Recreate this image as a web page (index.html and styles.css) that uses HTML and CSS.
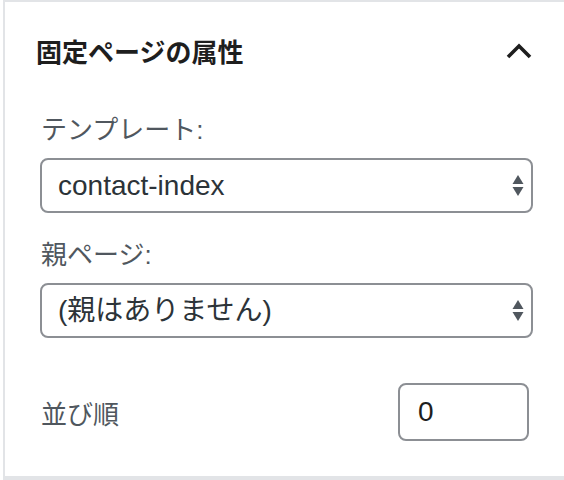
FILE: index.html
```html
<!DOCTYPE html>
<html lang="ja">
  <head>
    <meta charset="UTF-8" />
    <meta name="viewport" content="width=device-width, initial-scale=1.0" />
    <title>固定ページの属性</title>
    <link rel="stylesheet" href="styles.css">
  </head>
  <body>
    <div class="panel">
      <div class="panel-head">
        <h2 class="panel-title">固定ページの属性</h2>
        <svg class="chevron" width="26" height="16" viewBox="0 0 26 16">
          <polyline points="2,14 13,3 24,14" fill="none" stroke="#1e1e1e" stroke-width="3.6" />
        </svg>
      </div>
      <div class="panel-body">
        <label for="template" class="field-label">テンプレート:</label>
        <div class="select-wrap">
          <select id="template" class="field-select">
            <option>contact-index</option>
          </select>
          <svg class="arrows" width="12" height="22" viewBox="0 0 12 22">
            <polygon points="6,0 11.5,9 0.5,9" fill="#50575e" />
            <polygon points="0.5,12 11.5,12 6,21" fill="#50575e" />
          </svg>
        </div>

        <label for="parent" class="field-label second">親ページ:</label>
        <div class="select-wrap">
          <select id="parent" class="field-select">
            <option>(親はありません)</option>
          </select>
          <svg class="arrows" width="12" height="22" viewBox="0 0 12 22">
            <polygon points="6,0 11.5,9 0.5,9" fill="#50575e" />
            <polygon points="0.5,12 11.5,12 6,21" fill="#50575e" />
          </svg>
        </div>

        <div class="order-row">
          <label for="order" class="order-label">並び順</label>
          <input type="text" id="order" class="order-input" value="0" />
        </div>
      </div>
    </div>
  </body>
</html>
```

FILE: styles.css
```css
  body {
    margin: 0;
    background-color: white;
    font-family: "Liberation Sans", "Noto Sans CJK JP", sans-serif;
  }

  .panel {
    margin-left: 3px;
    height: 474px;
    background-color: white;
    border-top: 2px solid #e2e4e7;
    border-left: 2px solid #e2e4e7;
    border-bottom: 4px solid #e2e4e7;
  }

  .panel-head {
    height: 96px;
    display: flex;
    align-items: center;
    justify-content: space-between;
    padding: 0 32px 0 31px;
  }
  .panel-title {
    margin: 0;
    font-size: 26px;
    font-weight: bold;
    color: #1e1e1e;
    font-family: "Noto Sans CJK JP", sans-serif;
  }
  .chevron{
    display: block;
    margin-top: 2px;
  }

  .panel-body {
    padding: 16px 31px 0 35px;
  }

  .field-label {
    display: block;
    font-size: 26px;
    line-height: 32px;
    color: #50575e;
    margin-bottom: 12px;
    margin-left: 1px;
  }
  .second{
    margin-top: 26px;
  }

  .select-wrap {
    position: relative;
  }
  .field-select {
    display: block;
    width: 100%;
    height: 55px;
    box-sizing: border-box;
    appearance: none;
    -webkit-appearance: none;
    background-color: white;
    border: 2px solid #8c8f94;
    border-radius: 8px;
    padding: 0 40px 0 16px;
    font-family: "Liberation Sans", "Noto Sans CJK JP", sans-serif;
    font-size: 28px;
    color: #2c3338;
  }
  .arrows{
    position: absolute;
    right: 9px;
    top: 17px;
  }

  .order-row {
    display: flex;
    align-items: center;
    justify-content: space-between;
    margin-top: 45px;
    margin-right: 4px;
  }
  .order-label{
    font-size: 26px;
    color: #50575e;
    margin-left: 1px;
  }
  .order-input{
    width: 131px;
    height: 58px;
    box-sizing: border-box;
    border: 2px solid #8c8f94;
    border-radius: 8px;
    padding: 0 18px;
    font-family: "Liberation Sans", "Noto Sans CJK JP", sans-serif;
    font-size: 28px;
    color: #1e1e1e;
  }
```
